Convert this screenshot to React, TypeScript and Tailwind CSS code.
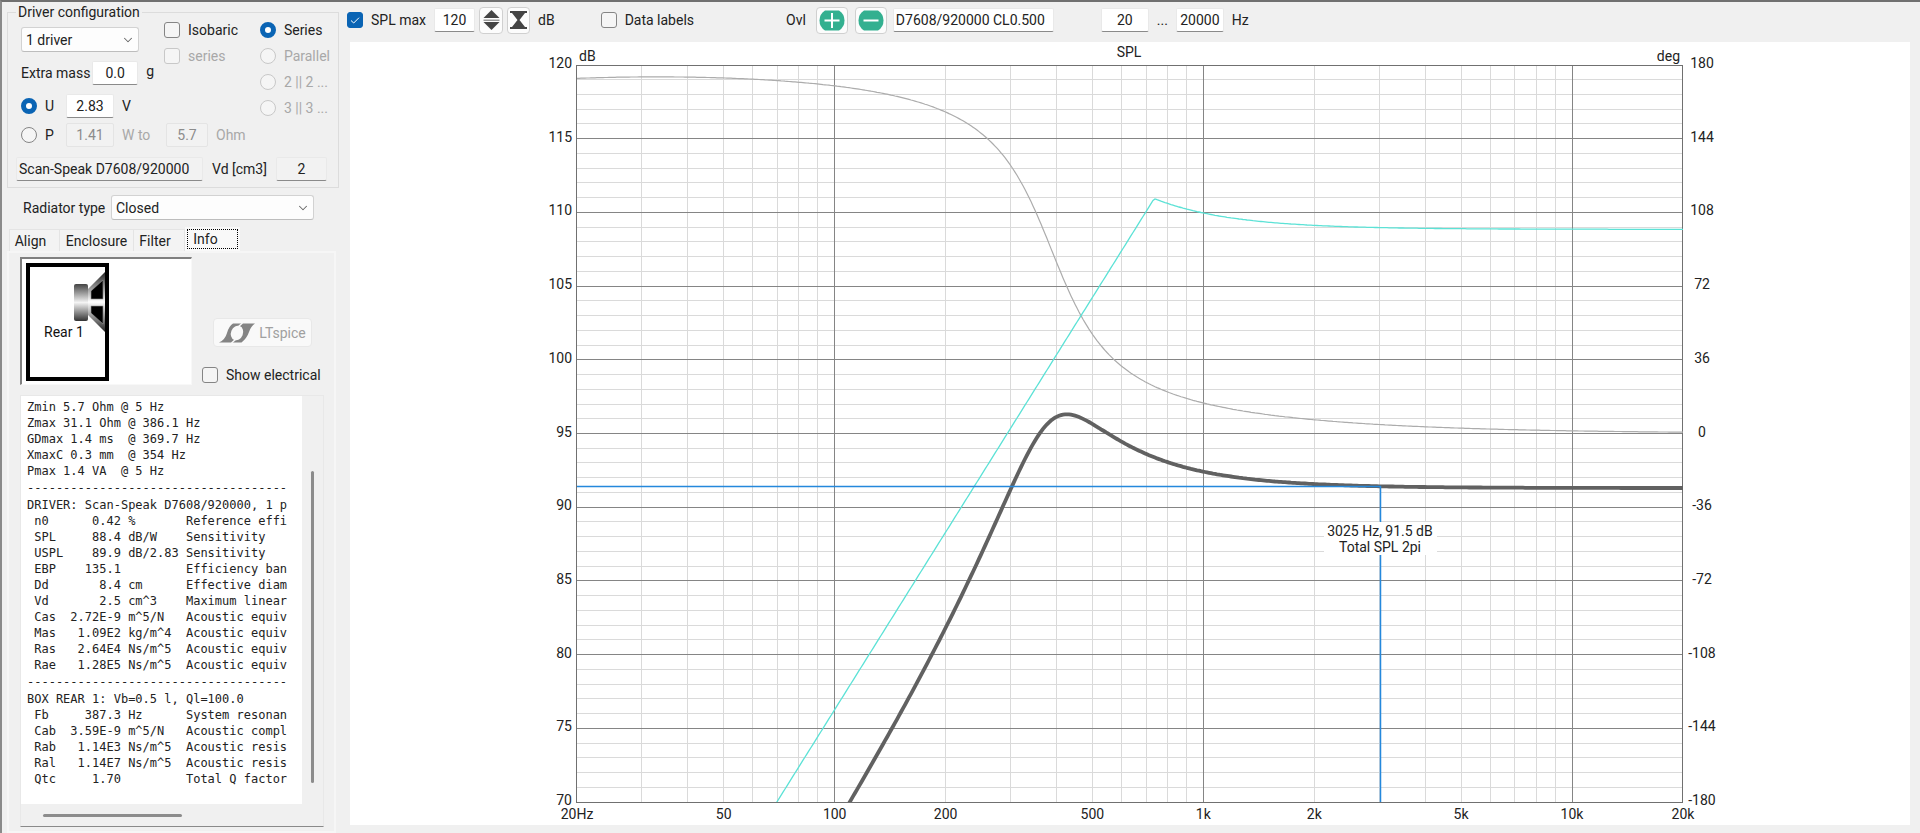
import { ChevronDown } from "lucide-react";
import type { ReactNode } from "react";

const zLines = [
  "Zmin 5.7 Ohm @ 5 Hz",
  "Zmax 31.1 Ohm @ 386.1 Hz",
  "GDmax 1.4 ms  @ 369.7 Hz",
  "XmaxC 0.3 mm  @ 354 Hz",
  "Pmax 1.4 VA  @ 5 Hz",
];

const driverLines = [
  "DRIVER: Scan-Speak D7608/920000, 1 p",
  " n0      0.42 %       Reference effi",
  " SPL     88.4 dB/W    Sensitivity",
  " USPL    89.9 dB/2.83 Sensitivity",
  " EBP    135.1         Efficiency ban",
  " Dd       8.4 cm      Effective diam",
  " Vd       2.5 cm^3    Maximum linear",
  " Cas  2.72E-9 m^5/N   Acoustic equiv",
  " Mas   1.09E2 kg/m^4  Acoustic equiv",
  " Ras   2.64E4 Ns/m^5  Acoustic equiv",
  " Rae   1.28E5 Ns/m^5  Acoustic equiv",
];

const boxLines = [
  "BOX REAR 1: Vb=0.5 l, Ql=100.0",
  " Fb     387.3 Hz      System resonan",
  " Cab  3.59E-9 m^5/N   Acoustic compl",
  " Rab   1.14E3 Ns/m^5  Acoustic resis",
  " Ral   1.14E7 Ns/m^5  Acoustic resis",
  " Qtc     1.70         Total Q factor",
];

const dashes = "-".repeat(36);

// Closed box response
const FB = 387.3;
const QTC = 1.7;
const REF_SPL = 91.3;

function spl(f: number) {
  const r = f / FB;
  const h = (r * r) / Math.hypot(1 - r * r, r / QTC);
  return REF_SPL + 20 * Math.log10(h);
}

function phase(f: number) {
  const r = f / FB;
  return 180 - (Math.atan2(r / QTC, 1 - r * r) * 180) / Math.PI - 96 / f;
}

// Right axis: 36 deg for every 5 dB, 0 deg at 95 dB
const phaseOnDbAxis = (f: number) => 95 + phase(f) / 7.2;

// Excursion limited below 733 Hz, power limited above
function splMax(f: number) {
  return Math.min(70 + 40 * Math.log10(f / 69.7), f < 733 ? 200 : spl(f) + 17.55);
}

// Plot area inside the chart
const L = 227;
const R = 1333;
const T = 23;
const B = 760;

const xOf = (f: number) => L + ((R - L) * Math.log10(f / 20)) / 3;
const yOf = (db: number) => T + ((120 - db) * (B - T)) / 50;
const crisp = (n: number) => Math.floor(n) + 0.5;

function curve(fn: (f: number) => number) {
  const points: string[] = [];
  for (let i = 0; i <= 553; i++) {
    const f = 20 * Math.pow(10, (3 * i) / 553);
    points.push(`${xOf(f).toFixed(1)},${yOf(fn(f)).toFixed(1)}`);
  }
  return points.join(" ");
}

const minorFreqs = [
  30, 40, 50, 60, 70, 80, 90, 200, 300, 400, 500, 600, 700, 800, 900, 2000,
  3000, 4000, 5000, 6000, 7000, 8000, 9000,
];
const majorFreqs = [100, 1000, 10000];
const freqLabels: [number, string][] = [
  [20, "20Hz"],
  [50, "50"],
  [100, "100"],
  [200, "200"],
  [500, "500"],
  [1000, "1k"],
  [2000, "2k"],
  [5000, "5k"],
  [10000, "10k"],
  [20000, "20k"],
];
const levels = Array.from({ length: 51 }, (_, i) => 120 - i);
const majorLevels = levels.filter((db) => db % 5 === 0);
const minorLevels = levels.filter((db) => db % 5 !== 0);

function Chart() {
  const cursorX = crisp(xOf(3025));
  const cursorY = crisp(yOf(91.4));

  return (
    <svg
      viewBox="0 0 1560 783"
      className="block h-auto w-full bg-white text-[14px]"
      fill="#222"
      role="img"
      aria-label="SPL chart"
    >
      <defs>
        <clipPath id="plot">
          <rect x={L} y={T} width={R - L} height={B - T} />
        </clipPath>
      </defs>

      <g stroke="#dadada">
        {minorFreqs.map((f) => (
          <line key={f} x1={crisp(xOf(f))} x2={crisp(xOf(f))} y1={T} y2={B} />
        ))}
        {minorLevels.map((db) => (
          <line key={db} x1={L} x2={R} y1={crisp(yOf(db))} y2={crisp(yOf(db))} />
        ))}
      </g>
      <g stroke="#858585">
        {majorFreqs.map((f) => (
          <line key={f} x1={crisp(xOf(f))} x2={crisp(xOf(f))} y1={T} y2={B} />
        ))}
        {majorLevels.map((db) => (
          <line key={db} x1={L} x2={R} y1={crisp(yOf(db))} y2={crisp(yOf(db))} />
        ))}
      </g>
      <rect x={L - 0.5} y={T + 0.5} width={R - L} height={B - T} fill="none" stroke="#707070" />

      <g fill="none" clipPath="url(#plot)">
        <polyline points={curve(phaseOnDbAxis)} stroke="#acacac" strokeWidth="1.2" />
        <polyline points={curve(splMax)} stroke="#5ce2d6" strokeWidth="1.3" />
        <polyline points={curve(spl)} stroke="#616161" strokeWidth="3.8" />
        <path d={`M${L} ${cursorY}H${cursorX}V${B}`} stroke="#2488dc" strokeWidth="1.5" />
      </g>

      <rect x="974" y="480" width="113" height="33" fill="#fff" />
      <g textAnchor="middle">
        <text x="1030" y="494">3025 Hz, 91.5 dB</text>
        <text x="1030" y="510">Total SPL 2pi</text>
        <text x="779" y="15">SPL</text>
        {freqLabels.map(([f, label]) => (
          <text key={f} x={xOf(f)} y="777">
            {label}
          </text>
        ))}
        {majorLevels.map((db) => (
          <text key={db} x="1352" y={yOf(db) + 3}>
            {Math.round((db - 95) * 7.2)}
          </text>
        ))}
      </g>
      <g textAnchor="end">
        <text x="1330" y="19">deg</text>
        {majorLevels.map((db) => (
          <text key={db} x="222" y={yOf(db) + 3}>
            {db}
          </text>
        ))}
      </g>
      <text x="229" y="19">dB</text>
    </svg>
  );
}

function Check({ label, checked, disabled }: { label: string; checked?: boolean; disabled?: boolean }) {
  return (
    <label className={`flex h-5 items-center gap-2 whitespace-nowrap ${disabled ? "text-[#a8a8a8]" : ""}`}>
      <span className="relative block size-4 shrink-0">
        <input
          type="checkbox"
          defaultChecked={checked}
          disabled={disabled}
          className="peer block size-4 appearance-none rounded-[3px] border border-[#858585] bg-[#f5f5f5] checked:border-[#0a64b4] checked:bg-[#0a64b4] disabled:border-[#c8c8c8]"
        />
        <svg
          viewBox="0 0 16 16"
          className="pointer-events-none absolute inset-0 hidden size-4 peer-checked:block"
          fill="none"
          stroke="#fff"
        >
          <path d="M4 8.5 6.7 11 12 5.7" />
        </svg>
      </span>
      {label}
    </label>
  );
}

function Radio({ name, label, checked, disabled }: { name: string; label: string; checked?: boolean; disabled?: boolean }) {
  return (
    <label className={`flex h-5 items-center gap-2 whitespace-nowrap ${disabled ? "text-[#a8a8a8]" : ""}`}>
      <input
        type="radio"
        name={name}
        defaultChecked={checked}
        disabled={disabled}
        className="size-4 shrink-0 appearance-none rounded-full border border-[#858585] bg-[#f5f5f5] checked:border-[5px] checked:border-[#0a64b4] checked:bg-white disabled:border-[#c8c8c8]"
      />
      {label}
    </label>
  );
}

function Field({ label, value, className, disabled, readOnly }: { label: string; value: string; className: string; disabled?: boolean; readOnly?: boolean }) {
  return (
    <input
      type="text"
      aria-label={label}
      defaultValue={value}
      disabled={disabled}
      readOnly={readOnly}
      className={`h-6 shrink-0 rounded-[2px] border border-[#e9e9e9] border-b-[#8a8a8a] bg-white read-only:bg-[#f2f2f2] disabled:border-[#e4e4e4] disabled:bg-[#f2f2f2] disabled:text-[#8c8c8c] ${className}`}
    />
  );
}

function Dropdown({ id, value, className }: { id: string; value: string; className: string }) {
  return (
    <div className={`relative shrink-0 ${className}`}>
      <select
        id={id}
        aria-label={value}
        className="h-[25px] w-full appearance-none rounded-[3px] border border-[#d2d2d2] border-b-[#bdbdbd] bg-[#fdfdfd] pl-1"
      >
        <option>{value}</option>
      </select>
      <ChevronDown className="pointer-events-none absolute top-1.5 right-1 size-3.5 text-[#666]" strokeWidth={1.75} />
    </div>
  );
}

function IconButton({ label, className, children }: { label: string; className: string; children: ReactNode }) {
  return (
    <button
      type="button"
      aria-label={label}
      className={`flex h-[27px] shrink-0 items-center justify-center rounded-[4px] border border-[#d0d0d0] bg-[#fcfcfc] ${className}`}
    >
      {children}
    </button>
  );
}

function SpeakerBox() {
  return (
    <svg viewBox="0 0 84 118" className="h-[118px] w-[84px]">
      <defs>
        <linearGradient id="metal" x1="0" x2="0" y1="0" y2="1">
          <stop offset="0" stopColor="#444" />
          <stop offset=".5" stopColor="#f4f4f4" />
          <stop offset="1" stopColor="#333" />
        </linearGradient>
        <linearGradient id="cone" x1="0" x2="0" y1="0" y2="1">
          <stop offset="0" stopColor="#222" />
          <stop offset=".5" stopColor="#fff" />
          <stop offset="1" stopColor="#222" />
        </linearGradient>
      </defs>
      <rect x="2" y="2" width="79" height="114" fill="#fff" stroke="#000" strokeWidth="4" />
      <path d="M61 27 79 9V69L61 51Z" fill="url(#cone)" />
      <path d="M65 28 77 17V36H65ZM65 43H77V61L65 50Z" fill="#000" stroke="#999" strokeWidth=".6" />
      <rect x="48" y="21" width="14" height="37" rx="2" fill="url(#metal)" />
      <text x="18" y="74" fontSize="14" fill="#111">
        Rear 1
      </text>
    </svg>
  );
}

function Sidebar() {
  return (
    <aside className="flex w-[341px] shrink-0 flex-col pt-0.5 pl-[5px]">
      <fieldset className="w-[332px] border border-[#dcdcdc] pb-1.5">
        <legend className="ml-2 px-0.5 leading-4">Driver configuration</legend>
        <div className="flex justify-between pr-2 pl-[13px]">
          <div>
            <div className="flex gap-2.5">
              <div className="flex flex-col gap-[9px] pt-[7px]">
                <Dropdown id="drivers" value="1 driver" className="w-[118px]" />
                <div className="flex w-[133px] items-center justify-between">
                  <span>Extra mass</span>
                  <div className="flex gap-2">
                    <Field label="Extra mass" value="0.0" className="w-[46px] text-center" />
                    <span>g</span>
                  </div>
                </div>
              </div>
              <div className="flex flex-col gap-1.5">
                <Check label="Isobaric" />
                <Check label="series" disabled />
              </div>
            </div>
            <div className="mt-[9px] flex items-center gap-2">
              <div className="w-[37px]">
                <Radio name="drive" label="U" checked />
              </div>
              <Field label="Voltage" value="2.83" className="w-12 text-center" />
              <span>V</span>
            </div>
            <div className="mt-[5px] flex items-center gap-2">
              <div className="w-[37px]">
                <Radio name="drive" label="P" />
              </div>
              <Field label="Power" value="1.41" className="w-12 text-center" disabled />
              <span className="w-9 text-[#a8a8a8]">W to</span>
              <Field label="Impedance" value="5.7" className="w-[42px] text-center" disabled />
              <span className="text-[#a8a8a8]">Ohm</span>
            </div>
          </div>
          <div className="flex flex-col gap-1.5">
            <Radio name="wiring" label="Series" checked />
            <Radio name="wiring" label="Parallel" disabled />
            <Radio name="wiring" label="2 || 2 ..." disabled />
            <Radio name="wiring" label="3 || 3 ..." disabled />
          </div>
        </div>
        <div className="mt-2.5 flex items-center justify-between pr-[11px] pl-2">
          <Field label="Driver" value="Scan-Speak D7608/920000" className="w-[187px] pl-0.5" readOnly />
          <span>Vd [cm3]</span>
          <Field label="Vd" value="2" className="w-[51px] text-center" readOnly />
        </div>
      </fieldset>

      <div className="mt-[7px] flex w-[307px] items-center justify-between pl-4">
        <label htmlFor="radiator">Radiator type</label>
        <Dropdown id="radiator" value="Closed" className="w-[203px]" />
      </div>

      <div role="tablist" className="mt-[7px] flex h-6 items-end pl-0.5">
        <button type="button" role="tab" className="h-[22px] w-[51px] border border-b-0 border-[#e4e4e4] bg-[#f3f3f3] pr-2">
          Align
        </button>
        <button type="button" role="tab" className="h-[22px] w-[74px] border border-b-0 border-l-0 border-[#e4e4e4] bg-[#f3f3f3]">
          Enclosure
        </button>
        <button type="button" role="tab" className="h-[22px] w-[51px] border border-b-0 border-l-0 border-[#e4e4e4] bg-[#f3f3f3] pr-2">
          Filter
        </button>
        <button type="button" role="tab" aria-selected="true" className="h-6 w-[55px] bg-[#f9f9f9] px-0.5">
          <span className="block h-5 border border-dotted border-black pr-3.5 leading-[18px]">Info</span>
        </button>
      </div>

      <div className="w-[329px] border-2 border-[#f6f6f6] px-[11px] pt-1 pb-1">
        <div className="flex gap-2.5">
          <div className="h-[128px] w-[172px] border-t-2 border-r border-b border-l-2 border-[#f8f8f8] border-t-[#808080] border-l-[#808080] bg-white p-1">
            <SpeakerBox />
          </div>
          <div className="flex flex-col justify-end gap-[18px]">
            <button
              type="button"
              disabled
              className="ml-[11px] flex h-[29px] w-[99px] items-center justify-center gap-1 rounded-[4px] border border-[#e8e8e8] bg-[#f9f9f9] text-[#a0a0a0]"
            >
              <svg viewBox="0 0 36 20" className="h-5 w-9">
                <path d="M0 19.500Q6 17 8 10T14 .5H36Q32 3 30 9T22.500 19.500Z" fill="#848484" />
                <ellipse cx="18" cy="10" rx="6" ry="7.500" transform="rotate(22 18 10)" fill="#f9f9f9" />
                <path d="M19 4 23.500 0M17 16 12.500 20" stroke="#f9f9f9" strokeWidth="1.500" />
              </svg>
              LTspice
            </button>
            <Check label="Show electrical" />
          </div>
        </div>

        <div className="mt-2.5 w-[304px] border border-[#e8e8e8] border-b-[#8a8a8a]">
          <div className="flex">
            <pre className="h-[408px] w-[281px] overflow-hidden bg-white pt-[3px] pl-1.5 font-['DejaVu_Sans_Mono',monospace] text-[12px] leading-4">
              {zLines.join("\n")}
              <span className="block leading-[18px]">{dashes}</span>
              {driverLines.join("\n")}
              <span className="block leading-[18px]">{dashes}</span>
              {boxLines.join("\n")}
            </pre>
            <div className="flex flex-1 justify-center pt-[75px]">
              <div className="h-[312px] w-[3px] rounded bg-[#8c8c8c]" />
            </div>
          </div>
          <div className="flex h-[22px] items-center pl-[22px]">
            <div className="h-[3px] w-[139px] rounded bg-[#8c8c8c]" />
          </div>
        </div>
      </div>
    </aside>
  );
}

function Toolbar() {
  return (
    <div className="flex h-10 items-center px-1 pb-3 pt-2">
      <Check label="SPL max" checked />
      <Field label="SPL max level" value="120" className="ml-2 w-[41px] text-center" />
      <IconButton label="Step level" className="ml-1 w-6">
        <svg viewBox="0 0 17 20" className="h-5 w-[17px]" fill="#444">
          <path d="M8.500 0 16.500 8H.5ZM.5 12h16l-8 8Z" />
          <path d="M.5 9.500h16v1.500H.5Z" fill="#999" />
        </svg>
      </IconButton>
      <IconButton label="Fit level" className="ml-1 w-[23px]">
        <svg viewBox="0 0 17 18" className="h-[18px] w-[17px]" fill="#444">
          <path d="M0 0h17v2H15L9.500 9 15 16h2v2H0V16H2L7.500 9 2 2H0Z" />
        </svg>
      </IconButton>
      <span className="ml-2">dB</span>
      <div className="ml-[46px]">
        <Check label="Data labels" />
      </div>
      <span className="ml-[92px]">Ovl</span>
      <IconButton label="Add overlay" className="ml-2.5 w-8">
        <svg viewBox="0 0 26 21" className="h-[21px] w-[26px]">
          <path d="M6 .5H20Q25.500 4 25.500 10.500T20 20.500H6Q.5 17 .5 10.500T6 .5Z" fill="#33b090" />
          <path d="M13 3V18M5.500 10.500H20.500" stroke="#fff" strokeWidth="2" />
        </svg>
      </IconButton>
      <IconButton label="Remove overlay" className="ml-[7px] w-8">
        <svg viewBox="0 0 26 21" className="h-[21px] w-[26px]">
          <path d="M6 .5H20Q25.500 4 25.500 10.500T20 20.500H6Q.5 17 .5 10.500T6 .5Z" fill="#33b090" />
          <path d="M5.500 10.500H20.500" stroke="#fff" strokeWidth="2" />
        </svg>
      </IconButton>
      <Field label="Overlay name" value="D7608/920000 CL0.500" className="ml-1.5 w-[161px] pl-0.5" />
      <Field label="From frequency" value="20" className="ml-[47px] w-12 text-center" />
      <span className="w-[27px] text-center">...</span>
      <Field label="To frequency" value="20000" className="w-12 text-center" />
      <span className="ml-2">Hz</span>
    </div>
  );
}

export default function App() {
  return (
    <div className="flex min-h-screen border-t-2 border-l-2 border-t-[#707070] border-l-[#8a8a8a] bg-[#f0f0f0] font-['Roboto',sans-serif] text-[14px] leading-5 text-[#222]">
      <Sidebar />
      <main className="min-w-0 flex-1 pr-2.5">
        <Toolbar />
        <div className="pl-[7px]">
          <Chart />
        </div>
      </main>
    </div>
  );
}
